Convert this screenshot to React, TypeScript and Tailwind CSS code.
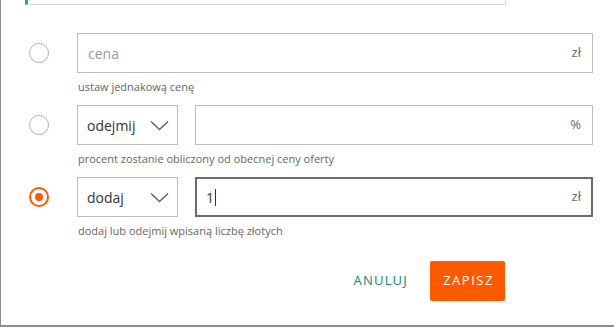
import { useState } from "react";

type Mode = "fixed" | "percent" | "amount";

function Radio({ checked, onClick }: { checked: boolean; onClick: () => void }) {
  return (
    <button
      type="button"
      onClick={onClick}
      className={
        checked
          ? "flex h-5 w-5 shrink-0 items-center justify-center rounded-full border-2 border-[#ff5a00]"
          : "flex h-5 w-5 shrink-0 items-center justify-center rounded-full border border-[#b5b5b5]"
      }
    >
      {checked && <span className="h-2 w-2 rounded-full bg-[#ff5a00]" />}
    </button>
  );
}

function Chevron() {
  return (
    <svg width="19" height="11" viewBox="0 0 19 11" fill="none">
      <path d="M1 1.5l8.5 8 8.5-8" stroke="#666" strokeWidth="1.6" />
    </svg>
  );
}

function Select({ value }: { value: string }) {
  return (
    <div className="flex h-10 w-[101px] shrink-0 items-center justify-between border border-[#bdbdbd] pl-[9px] pr-[8px] text-[14px] text-[#333]">
      <span>{value}</span>
      <Chevron />
    </div>
  );
}

function Field({ value, placeholder, unit, active }: { value?: string; placeholder?: string; unit: string; active?: boolean }) {
  return (
    <div
      className={
        active
          ? "flex h-10 flex-1 items-center justify-between border-2 border-[#6b6b6b] pl-[9px] pr-[10px] text-[14px]"
          : "flex h-10 flex-1 items-center justify-between border border-[#bdbdbd] pl-[10px] pr-[11px] text-[14px]"
      }
    >
      <span className={value ? "text-[#333]" : "text-[#9a9a9a]"}>
        {value || placeholder || ""}
        {active && <span className="ml-[1px] inline-block h-[17px] w-px translate-y-[3px] bg-[#333]" />}
      </span>
      <span className="text-[13px] text-[#666]">{unit}</span>
    </div>
  );
}

function Hint({ children }: { children: string }) {
  return <p className="mt-[6px] pl-[77px] text-[11px] leading-[15px] text-[#666]">{children}</p>;
}

export default function App() {
  const [mode, setMode] = useState<Mode>("amount");

  return (
    <div className="h-[327px] w-[614px] overflow-hidden bg-[#8c8c8c] pl-px font-['Open_Sans',sans-serif]">
      <div className="flex h-[325px] flex-col bg-white">
        {/* header strip cut off at the top */}
        <div className="ml-[24px] h-[5px] w-[481px] border-b border-r border-l-[3px] border-b-[#d9d9d9] border-r-[#d9d9d9] border-l-[#3d8fd1]" />

        <div className="mt-[28px] flex flex-col">
          {/* fixed price */}
          <div className="flex items-center">
            <div className="flex w-[76px] pl-[28px]">
              <Radio checked={mode === "fixed"} onClick={() => setMode("fixed")} />
            </div>
            <div className="mr-[21px] flex flex-1">
              <Field placeholder="cena" unit="zł" />
            </div>
          </div>
          <Hint>ustaw jednakową cenę</Hint>

          {/* percent */}
          <div className="mt-[11px] flex items-center">
            <div className="flex w-[76px] pl-[28px]">
              <Radio checked={mode === "percent"} onClick={() => setMode("percent")} />
            </div>
            <div className="mr-[21px] flex flex-1 gap-[17px]">
              <Select value="odejmij" />
              <Field unit="%" />
            </div>
          </div>
          <Hint>procent zostanie obliczony od obecnej ceny oferty</Hint>

          {/* amount */}
          <div className="mt-[11px] flex items-center">
            <div className="flex w-[76px] pl-[28px]">
              <Radio checked={mode === "amount"} onClick={() => setMode("amount")} />
            </div>
            <div className="mr-[21px] flex flex-1 gap-[17px]">
              <Select value="dodaj" />
              <Field value="1" unit="zł" active={mode === "amount"} />
            </div>
          </div>
          <Hint>dodaj lub odejmij wpisaną liczbę złotych</Hint>
        </div>

        {/* actions */}
        <div className="mt-[23px] flex w-[504px] items-center justify-end">
          <button type="button" className="mr-[22px] text-[13px] tracking-[1.2px] text-[#0f8576]">
            ANULUJ
          </button>
          <button type="button" className="h-10 w-[75px] rounded-[2px] bg-[#ff5a00] pl-[2px] text-[13px] tracking-[1.5px] text-white">
            ZAPISZ
          </button>
        </div>
      </div>
    </div>
  );
}
